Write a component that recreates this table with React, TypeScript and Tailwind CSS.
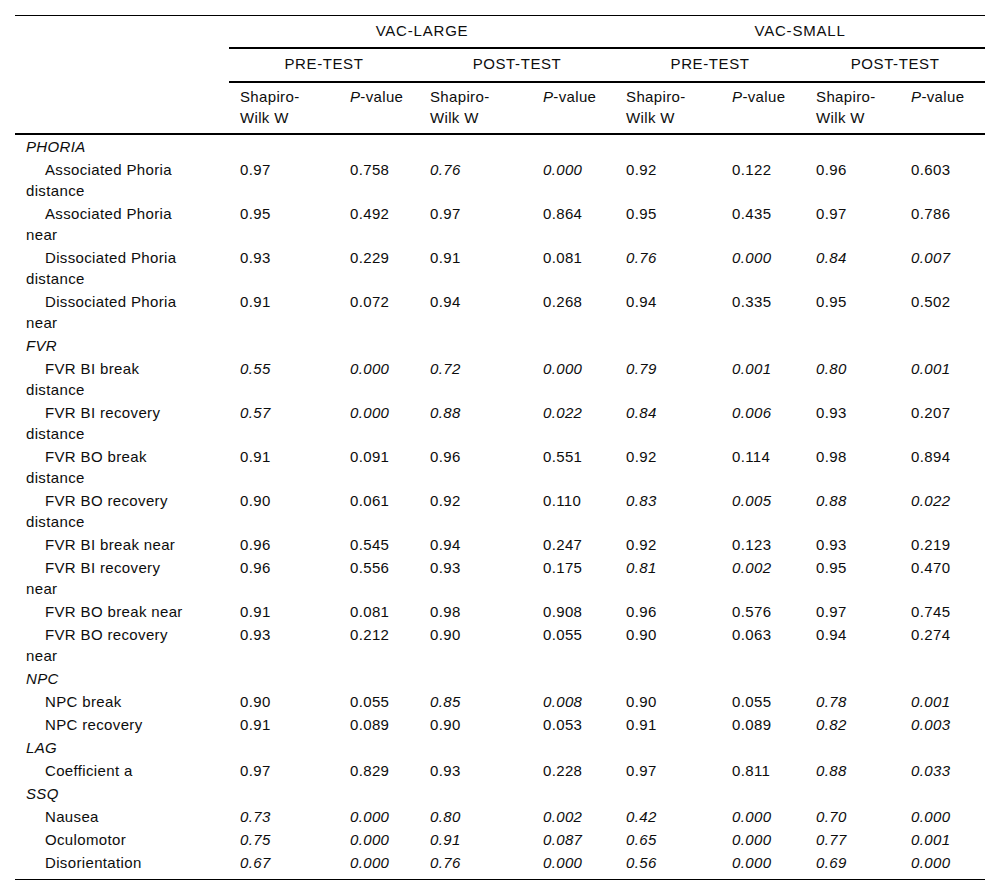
type Row =
  | { kind: "group"; label: string }
  | { kind: "data"; lines: string[]; values: string[] };

// "*" marks a value set in italics (non-normal distribution)
const rows: Row[] = [
  { kind: "group", label: "PHORIA" },
  { kind: "data", lines: ["Associated Phoria", "distance"], values: ["0.97", "0.758", "*0.76", "*0.000", "0.92", "0.122", "0.96", "0.603"] },
  { kind: "data", lines: ["Associated Phoria", "near"], values: ["0.95", "0.492", "0.97", "0.864", "0.95", "0.435", "0.97", "0.786"] },
  { kind: "data", lines: ["Dissociated Phoria", "distance"], values: ["0.93", "0.229", "0.91", "0.081", "*0.76", "*0.000", "*0.84", "*0.007"] },
  { kind: "data", lines: ["Dissociated Phoria", "near"], values: ["0.91", "0.072", "0.94", "0.268", "0.94", "0.335", "0.95", "0.502"] },
  { kind: "group", label: "FVR" },
  { kind: "data", lines: ["FVR BI break", "distance"], values: ["*0.55", "*0.000", "*0.72", "*0.000", "*0.79", "*0.001", "*0.80", "*0.001"] },
  { kind: "data", lines: ["FVR BI recovery", "distance"], values: ["*0.57", "*0.000", "*0.88", "*0.022", "*0.84", "*0.006", "0.93", "0.207"] },
  { kind: "data", lines: ["FVR BO break", "distance"], values: ["0.91", "0.091", "0.96", "0.551", "0.92", "0.114", "0.98", "0.894"] },
  { kind: "data", lines: ["FVR BO recovery", "distance"], values: ["0.90", "0.061", "0.92", "0.110", "*0.83", "*0.005", "*0.88", "*0.022"] },
  { kind: "data", lines: ["FVR BI break near"], values: ["0.96", "0.545", "0.94", "0.247", "0.92", "0.123", "0.93", "0.219"] },
  { kind: "data", lines: ["FVR BI recovery", "near"], values: ["0.96", "0.556", "0.93", "0.175", "*0.81", "*0.002", "0.95", "0.470"] },
  { kind: "data", lines: ["FVR BO break near"], values: ["0.91", "0.081", "0.98", "0.908", "0.96", "0.576", "0.97", "0.745"] },
  { kind: "data", lines: ["FVR BO recovery", "near"], values: ["0.93", "0.212", "0.90", "0.055", "0.90", "0.063", "0.94", "0.274"] },
  { kind: "group", label: "NPC" },
  { kind: "data", lines: ["NPC break"], values: ["0.90", "0.055", "*0.85", "*0.008", "0.90", "0.055", "*0.78", "*0.001"] },
  { kind: "data", lines: ["NPC recovery"], values: ["0.91", "0.089", "0.90", "0.053", "0.91", "0.089", "*0.82", "*0.003"] },
  { kind: "group", label: "LAG" },
  { kind: "data", lines: ["Coefficient a"], values: ["0.97", "0.829", "0.93", "0.228", "0.97", "0.811", "*0.88", "*0.033"] },
  { kind: "group", label: "SSQ" },
  { kind: "data", lines: ["Nausea"], values: ["*0.73", "*0.000", "*0.80", "*0.002", "*0.42", "*0.000", "*0.70", "*0.000"] },
  { kind: "data", lines: ["Oculomotor"], values: ["*0.75", "*0.000", "*0.91", "*0.087", "*0.65", "*0.000", "*0.77", "*0.001"] },
  { kind: "data", lines: ["Disorientation"], values: ["*0.67", "*0.000", "*0.76", "*0.000", "*0.56", "*0.000", "*0.69", "*0.000"] },
];

const widths = [214, 110, 80, 113, 83, 106, 84, 95, 85];

function PValue() {
  return (
    <>
      <i>P</i>-value
    </>
  );
}

export default function App() {
  const cell = "px-[11px] text-left align-top font-normal";
  return (
    <div className="min-h-screen bg-white pt-[15px] px-[15px] text-[15px] leading-[21px] tracking-[0.35px] text-[#0d0d0d]" style={{ fontFamily: '"Liberation Sans", Arial, sans-serif' }}>
      <table className="w-[970px] table-fixed border-separate border-spacing-0">
        <colgroup>
          {widths.map((w, i) => (
            <col key={i} style={{ width: w }} />
          ))}
        </colgroup>
        <thead>
          <tr>
            <th rowSpan={3} className="border-t border-b-2 border-black p-0" />
            <th colSpan={4} className="border-t border-b-2 border-black pt-[4px] pb-[6px] text-center font-normal tracking-[0.8px]">
              VAC-LARGE
            </th>
            <th colSpan={4} className="border-t border-b-2 border-black pt-[4px] pb-[6px] text-center font-normal tracking-[0.8px]">
              VAC-SMALL
            </th>
          </tr>
          <tr>
            {["PRE-TEST", "POST-TEST", "PRE-TEST", "POST-TEST"].map((t, i) => (
              <th key={i} colSpan={2} className="border-b-2 border-black pt-[4px] pb-[7px] text-center font-normal tracking-[0.6px]">
                {t}
              </th>
            ))}
          </tr>
          <tr>
            {[0, 1, 2, 3].map((i) => (
              <>
                <th key={`w${i}`} className={`${cell} border-b-2 border-black pt-[3px] pb-[5px]`}>
                  Shapiro-
                  <br />
                  Wilk W
                </th>
                <th key={`p${i}`} className={`${cell} border-b-2 border-black pt-[3px] pb-[5px]`}>
                  <PValue />
                </th>
              </>
            ))}
          </tr>
        </thead>
        <tbody>
          {rows.map((r, ri) => {
            const last = ri === rows.length - 1;
            const pad = last ? "pt-px pb-[6px] border-b border-black" : "py-px";
            if (r.kind === "group") {
              return (
                <tr key={ri}>
                  <td className={`${cell} ${pad} italic`}>{r.label}</td>
                  {widths.slice(1).map((_, i) => (
                    <td key={i} className={`${cell} ${pad}`} />
                  ))}
                </tr>
              );
            }
            return (
              <tr key={ri}>
                <td className={`${cell} ${pad} indent-[19px]`}>
                  {r.lines.map((l, li) => (
                    <span key={li}>
                      {li > 0 && <br />}
                      {l}
                    </span>
                  ))}
                </td>
                {r.values.map((v, vi) => (
                  <td key={vi} className={`${cell} ${pad} ${v.startsWith("*") ? "italic" : ""}`}>
                    {v.replace("*", "")}
                  </td>
                ))}
              </tr>
            );
          })}
        </tbody>
      </table>
    </div>
  );
}
